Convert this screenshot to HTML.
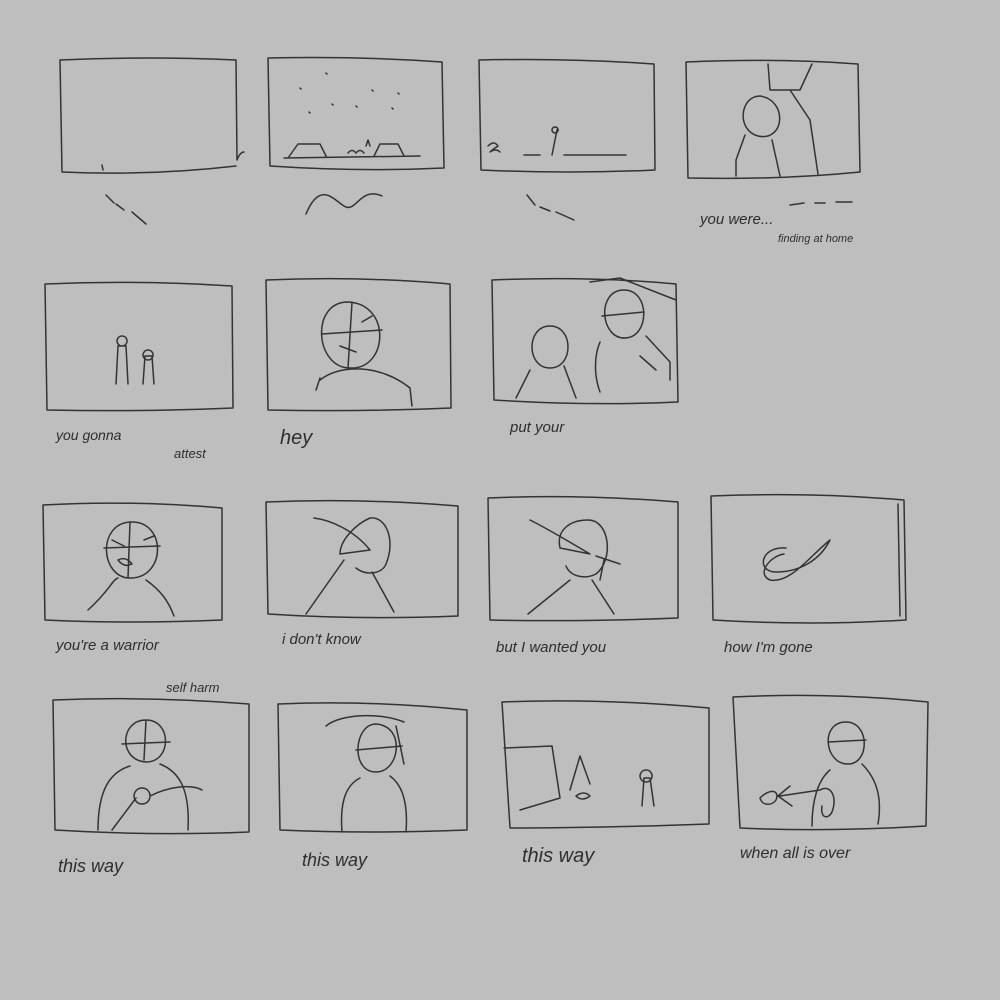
<!DOCTYPE html>
<html><head><meta charset="utf-8"><style>
html,body{margin:0;padding:0;background:#bebebe;}
svg{display:block}
text{font-family:"Liberation Sans",sans-serif;fill:#2e2e2e;font-style:italic}
</style></head><body>
<svg width="1000" height="1000" viewBox="0 0 1000 1000" xmlns="http://www.w3.org/2000/svg">
<rect width="1000" height="1000" fill="#bebebe"/>
<g fill="none" stroke="#333" stroke-width="1.5" stroke-linecap="round" stroke-linejoin="round">
<!-- Row 1 -->
<path d="M60 60 Q150 56 236 60 L237 160 Q240 152 244 152 M236 166 Q150 176 62 172 L60 60"/>
<path d="M102 165 l1 5"/>
<path d="M268 58 Q360 56 442 62 L444 168 Q360 172 270 166 L268 58"/>
<path d="M288 158 L298 144 L320 144 L326 156 M374 156 L380 144 L398 144 L404 156 M284 158 L420 156"/>
<path d="M300 88 l1 1 M326 73 l1 1 M332 104 l1 1 M356 106 l1 1 M372 90 l1 1 M398 93 l1 1 M309 112 l1 1 M392 108 l1 1 M366 146 l2 -6 l2 6"/>
<path d="M348 153 q4 -5 8 0 q4 -5 8 0"/>
<path d="M479 60 Q570 58 654 64 L655 170 Q570 174 481 170 L479 60"/>
<path d="M524 155 L540 155 M552 155 L557 130 M555 127 a3 3 0 1 0 0.1 0 M564 155 L626 155"/>
<path d="M488 146 q6 -6 10 0 q-6 4 -8 6 q6 -4 10 0"/>
<path d="M686 62 Q780 58 858 64 L860 172 Q780 180 688 178 L686 62"/>
<path d="M768 64 L770 90 L800 90 L812 64 M790 90 L810 120 L818 174"/>
<path d="M760 96 C740 96 736 130 758 136 C785 142 788 100 760 96 Z M745 135 L736 160 L736 176 M772 140 L780 176"/>
<path d="M106 195 l8 8 M116 204 l8 6 M132 212 l14 12"/>
<path d="M306 214 C320 180 334 200 344 206 C356 214 360 186 382 196"/>
<path d="M527 195 l8 10 M540 207 l10 4 M556 212 l18 8"/>
<path d="M790 205 l14 -2 M815 203 l10 0 M836 202 l16 0"/>
<!-- Row 2 -->
<path d="M45 284 Q140 280 232 286 L233 408 Q140 412 47 410 L45 284"/>
<path d="M122 336 a5 5 0 1 0 0.1 0 M116 384 L118 346 L126 346 L128 384 M148 350 a5 5 0 1 0 0.1 0 M143 384 L145 356 L152 356 L154 384"/>
<path d="M266 280 Q360 276 450 284 L451 408 Q360 412 268 410 L266 280"/>
<path d="M348 302 C310 302 315 368 350 368 C388 370 392 304 348 302 Z M322 334 L382 330 M352 302 L348 368 M340 346 L356 352 M362 322 l10 -6 M320 380 C340 364 380 364 410 388 M316 390 L320 378 M410 388 L412 406"/>
<path d="M492 280 Q590 276 676 284 L678 402 Q590 406 494 400 L492 280"/>
<path d="M590 282 L620 278 L676 300"/>
<path d="M550 326 C526 326 526 368 550 368 C574 368 574 326 550 326 Z M530 370 L516 398 M564 366 L576 398"/>
<path d="M624 290 C596 290 600 340 626 338 C650 336 650 290 624 290 Z M602 316 L644 312 M600 342 C594 356 594 376 600 392 M646 336 L670 362 L670 380 M640 356 L656 370"/>
<!-- Row 3 -->
<path d="M43 505 Q130 500 222 508 L222 620 Q130 624 45 620 L43 505"/>
<path d="M132 522 C96 522 100 580 132 578 C166 576 166 522 132 522 Z M104 548 L160 546 M130 522 L128 578 M118 560 q8 -4 14 4 q-8 4 -14 -4 M112 540 l12 6 M144 540 l10 -4 M88 610 C110 590 112 580 118 578 M146 580 C160 590 168 600 174 616"/>
<path d="M266 502 Q360 498 458 506 L458 616 Q360 620 268 614 L266 502"/>
<path d="M314 518 C330 520 354 530 370 550 L340 554 C340 540 356 524 370 518 C386 516 396 540 386 564 C382 574 366 576 356 568 M344 560 L306 614 M372 572 L394 612"/>
<path d="M488 498 Q580 494 678 502 L678 618 Q580 622 490 620 L488 498"/>
<path d="M530 520 C550 530 566 540 590 554 L560 548 C556 530 570 520 588 520 C610 520 614 560 596 574 C584 580 570 576 566 566 M596 556 L620 564 M604 560 L600 580 M570 580 L528 614 M592 580 L614 614"/>
<path d="M711 496 Q810 492 904 500 L906 620 Q810 626 713 620 L711 496 M898 504 L900 616"/>
<path d="M786 548 C760 546 756 572 776 572 C800 572 820 560 830 540 C810 556 790 584 770 580 C756 574 770 556 784 554"/>
<!-- Row 4 -->
<path d="M53 700 Q150 696 249 704 L249 832 Q150 836 55 830 L53 700"/>
<path d="M146 720 C120 720 118 760 146 762 C172 762 172 720 146 720 Z M122 744 L170 742 M146 720 L144 760 M130 766 C110 772 98 790 98 830 M160 764 C180 772 190 790 188 830 M142 788 a8 8 0 1 0 0.1 0 M136 798 L112 830 M150 796 C170 786 192 784 202 790"/>
<path d="M278 704 Q370 700 467 710 L467 830 Q370 834 280 830 L278 704"/>
<path d="M326 726 C340 714 380 712 404 722 M376 724 C354 724 350 772 376 772 C400 772 406 726 376 724 Z M356 750 L402 746 M396 726 L404 764 M360 778 C344 786 340 806 342 832 M390 776 C404 786 408 806 406 832"/>
<path d="M502 702 Q600 698 709 708 L709 824 Q600 828 510 828 L502 702"/>
<path d="M504 748 L552 746 L560 798 L520 810 M570 790 L580 756 L590 784 M576 796 q8 -6 14 0 q-8 6 -14 0 M646 770 a6 6 0 1 0 0.1 0 M642 806 L644 778 L650 778 L654 806"/>
<path d="M733 697 Q830 692 928 702 L926 826 Q830 832 740 828 L733 697"/>
<path d="M846 722 C820 722 824 764 848 764 C870 764 870 722 846 722 Z M828 742 L866 740 M830 770 C818 780 812 800 812 826 M862 764 C878 780 882 800 878 824 M760 798 C770 788 780 790 776 800 C772 806 762 806 760 798 M780 796 L820 790 M790 786 L778 796 L792 806 M820 790 C830 784 838 796 832 812 C828 820 820 818 822 806"/>
</g>
<g font-size="15">
<text x="700" y="224">you were...</text>
<text x="778" y="242" font-size="11">finding at home</text>
<text x="56" y="440" font-size="14">you gonna</text>
<text x="174" y="458" font-size="13">attest</text>
<text x="280" y="444" font-size="20">hey</text>
<text x="510" y="432" font-size="15">put your</text>
<text x="56" y="650">you're a warrior</text>
<text x="282" y="644">i don't know</text>
<text x="496" y="652">but I wanted you</text>
<text x="724" y="652">how I'm gone</text>
<text x="166" y="692" font-size="13">self harm</text>
<text x="58" y="872" font-size="18">this way</text>
<text x="302" y="866" font-size="18">this way</text>
<text x="522" y="862" font-size="20">this way</text>
<text x="740" y="858" font-size="16">when all is over</text>
</g>
</svg>
</body></html>
